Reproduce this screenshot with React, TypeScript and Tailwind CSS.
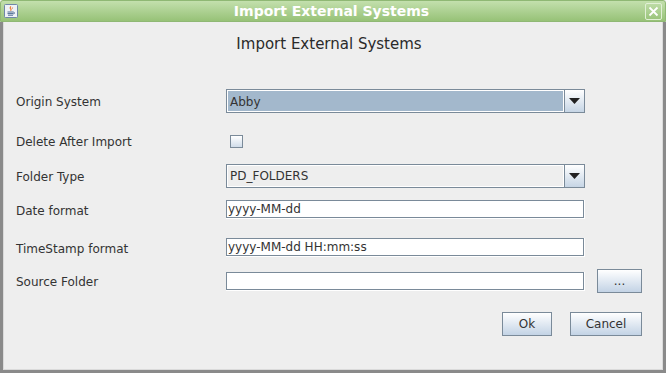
import React from 'react'

const font = { fontFamily: '"DejaVu Sans", "Liberation Sans", sans-serif' }

function JavaIcon() {
  return (
    <svg width="14" height="14" viewBox="0 0 14 14">
      <rect x="0.5" y="0.5" width="13" height="13" rx="1" fill="#eef2f7" stroke="#6f87a8" />
      <path d="M7 2.5c-1.2 1-1 1.8-0.2 2.6c0.6 0.6 0.3 1.2-0.3 1.6" fill="none" stroke="#e8742a" strokeWidth="1.1" />
      <path d="M8.6 3.5c-0.6 0.6-0.4 1 0 1.5" fill="none" stroke="#e8742a" strokeWidth="0.9" />
      <path d="M3.5 8h6M3.5 9.6h6M4 11.2h5" stroke="#4e6c94" strokeWidth="1" />
      <path d="M9.5 8.2c1.4 0 1.4 1.6 0 1.8" fill="none" stroke="#4e6c94" strokeWidth="0.9" />
    </svg>
  )
}

function ArrowButton() {
  return (
    <div className="w-[20px] h-full flex items-center justify-center border-l border-[#7a8a99] bg-gradient-to-b from-white to-[#c6d5e5]">
      <svg width="11" height="6" viewBox="0 0 11 6">
        <path d="M0 0h11L5.5 6z" fill="#222" />
      </svg>
    </div>
  )
}

function Combo({ value, selected }: { value: string; selected?: boolean }) {
  return (
    <div className="w-[359px] h-[24px] flex border border-[#7a8a99]">
      <div
        className={`flex-1 flex items-center pl-[2px] pt-[1px] text-[12px] text-[#333] border border-white ${
          selected ? 'bg-[#a3b8cc]' : 'bg-[#eeeeee]'
        }`}
      >
        {value}
      </div>
      <ArrowButton />
    </div>
  )
}

function Field({ value }: { value: string }) {
  return (
    <div className="w-[359px] h-[19px] border-r border-b border-white">
      <div className="h-full flex items-center bg-white border border-[#7a8a99] pl-[1px] text-[12px] text-[#333]">
        {value}
      </div>
    </div>
  )
}

function Btn({ label, w }: { label: string; w: string }) {
  return (
    <button
      type="button"
      className={`${w} h-[24px] border border-[#7a8a99] bg-gradient-to-b from-white to-[#c3d3e5] text-[12px] text-[#333] flex items-center justify-center`}
    >
      {label}
    </button>
  )
}

const label = 'w-[210px] pt-[2px] text-[12px] text-[#333]'

export default function App() {
  return (
    <div className="w-[666px] h-[373px] bg-[#eeeeee] flex flex-col overflow-hidden" style={font}>
      <div className="h-[22px] flex items-center px-[3px] rounded-t-[3px] border border-[#8fb874] bg-gradient-to-b from-[#c3e0ad] to-[#97c277]">
        <JavaIcon />
        <div className="flex-1 text-center text-white font-bold text-[14px] leading-none">
          Import External Systems
        </div>
        <div className="w-[17px] h-[17px] border border-[#e1f0d6] rounded-[2px] flex items-center justify-center">
          <svg width="11" height="11" viewBox="0 0 11 11">
            <path d="M1.5 1.5l8 8M9.5 1.5l-8 8" stroke="white" strokeWidth="1.8" />
          </svg>
        </div>
      </div>
      <div className="flex-1 flex flex-col border-x-[3px] border-b-[3px] border-[#8a8a8a]">
        <div className="flex-1 flex flex-col border-x border-b border-[#dadada] pl-[12px] pr-[20px]">
          <div className="mt-[13px] h-[18px] text-center text-[15px] leading-[18px] text-[#2a2a2a]">
            Import External Systems
          </div>

          <div className="mt-[36px] h-[24px] flex items-center">
            <div className={label}>Origin System</div>
            <Combo value="Abby" selected />
          </div>

          <div className="mt-[16px] h-[25px] flex items-center">
            <div className="w-[210px] text-[12px] text-[#333]">Delete After Import</div>
            <div className="ml-[4px] w-[13px] h-[13px] border border-[#7a8a99] bg-gradient-to-b from-white to-[#d0dce9]" />
          </div>

          <div className="mt-[10px] h-[23px] flex items-center">
            <div className={label}>Folder Type</div>
            <Combo value="PD_FOLDERS" />
          </div>

          <div className="mt-[13px] h-[19px] flex items-center">
            <div className={label}>Date format</div>
            <Field value="yyyy-MM-dd" />
          </div>

          <div className="mt-[19px] h-[19px] flex items-center">
            <div className={label}>TimeStamp format</div>
            <Field value="yyyy-MM-dd HH:mm:ss" />
          </div>

          <div className="mt-[12px] h-[24px] flex items-center">
            <div className={label}>Source Folder</div>
            <Field value="" />
            <div className="ml-[12px]">
              <Btn label="..." w="w-[45px]" />
            </div>
          </div>

          <div className="mt-[19px] flex justify-end gap-[18px]">
            <Btn label="Ok" w="w-[50px]" />
            <Btn label="Cancel" w="w-[72px]" />
          </div>
        </div>
      </div>
    </div>
  )
}
